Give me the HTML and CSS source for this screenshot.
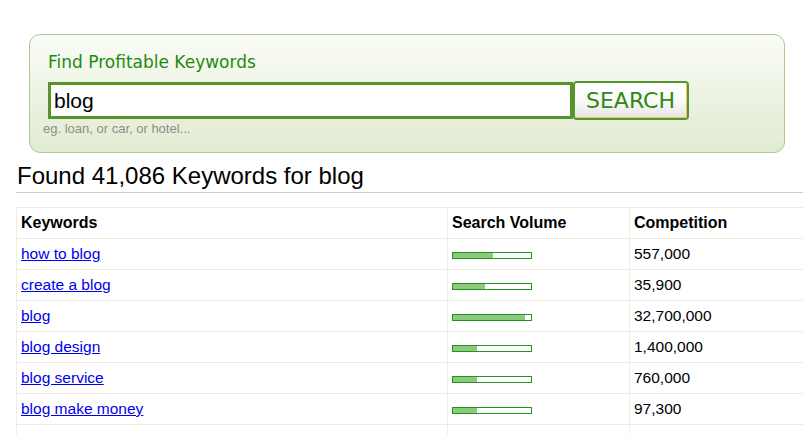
FILE: index.html
```html
<!DOCTYPE html>
<html>
<head>
<meta charset="utf-8">
<link rel="stylesheet" href="styles.css">
</head>
<body>
<div class="page">
  <form class="search-box">
    <div class="search-title">Find Profitable Keywords</div>
    <div class="search-row">
      <input class="search-input" type="text" value="blog">
      <button class="search-btn" type="button"><span class="search-btn-inner">SEARCH</span></button>
    </div>
    <div class="search-hint">eg. loan, or car, or hotel...</div>
  </form>

  <h1 class="results-title">Found 41,086 Keywords for blog</h1>

  <div class="table-wrap">
    <table class="kw-table">
      <thead>
        <tr>
          <th class="col-kw">Keywords</th>
          <th class="col-vol">Search Volume</th>
          <th class="col-comp">Competition</th>
        </tr>
      </thead>
      <tbody>
        <tr>
          <td><a href="#">how to blog</a></td>
          <td><div class="bar"><div class="bar-fill" style="width:51%"></div></div></td>
          <td>557,000</td>
        </tr>
        <tr>
          <td><a href="#">create a blog</a></td>
          <td><div class="bar"><div class="bar-fill" style="width:41%"></div></div></td>
          <td>35,900</td>
        </tr>
        <tr>
          <td><a href="#">blog</a></td>
          <td><div class="bar"><div class="bar-fill" style="width:92%"></div></div></td>
          <td>32,700,000</td>
        </tr>
        <tr>
          <td><a href="#">blog design</a></td>
          <td><div class="bar"><div class="bar-fill" style="width:31%"></div></div></td>
          <td>1,400,000</td>
        </tr>
        <tr>
          <td><a href="#">blog service</a></td>
          <td><div class="bar"><div class="bar-fill" style="width:31%"></div></div></td>
          <td>760,000</td>
        </tr>
        <tr>
          <td><a href="#">blog make money</a></td>
          <td><div class="bar"><div class="bar-fill" style="width:31%"></div></div></td>
          <td>97,300</td>
        </tr>
        <tr>
          <td>&nbsp;</td>
          <td>&nbsp;</td>
          <td>&nbsp;</td>
        </tr>
      </tbody>
    </table>
  </div>
</div>
</body>
</html>
```

FILE: styles.css
```css
html, body {
  margin: 0;
  padding: 0;
  background: #ffffff;
  overflow: hidden;
}

.page {
  width: 803px;
  height: 434px;
  overflow: hidden;
  font-family: "Liberation Sans", Arial, sans-serif;
  color: #000;
}

.search-box {
  box-sizing: border-box;
  margin: 34px 0 0 29px;
  width: 756px;
  height: 119px;
  border: 1px solid #a9cb92;
  border-radius: 11px;
  background: linear-gradient(#fbfcf8 0%, #eef4e5 45%, #e1ebd1 100%);
  padding: 16px 0 0 18px;
}

.search-title {
  font-family: "DejaVu Sans", Verdana, sans-serif;
  font-size: 17px;
  line-height: 22px;
  color: #1f8a0f;
}

.search-row {
  display: flex;
  align-items: center;
  margin-top: 8px;
}

.search-input {
  box-sizing: border-box;
  width: 525px;
  height: 37px;
  margin: 0;
  border: 3px solid #56952e;
  padding: 0 0 0 3px;
  font-family: "Liberation Sans", Arial, sans-serif;
  font-size: 21px;
  color: #000;
  background: #fff;
  outline: none;
}

.search-btn {
  box-sizing: border-box;
  width: 116px;
  height: 39px;
  margin: 0;
  padding: 0;
  border: 2px solid #56952e;
  border-radius: 4px;
  background: #fff;
  cursor: pointer;
  display: flex;
}

.search-btn-inner {
  flex: 1;
  display: flex;
  align-items: center;
  justify-content: center;
  border-right: 1px solid #f3c35a;
  border-bottom: 1px solid #f3c35a;
  border-radius: 2px;
  background: linear-gradient(#ffffff 0%, #fbfbfb 50%, #e6e6e6 100%);
  font-family: "DejaVu Sans", Verdana, sans-serif;
  font-size: 22px;
  color: #2f8a14;
}

.search-hint {
  margin: 1px 0 0 -5px;
  font-size: 13px;
  line-height: 15px;
  color: #8a8f88;
}

.results-title {
  margin: 9px 0 0 16px;
  padding: 0 0 2px 1px;
  font-family: "Liberation Sans", Arial, sans-serif;
  font-size: 24px;
  font-weight: normal;
  line-height: 28px;
  border-bottom: 1px solid #cccccc;
}

.table-wrap {
  margin: 14px 0 0 16px;
  width: 820px;
}

.kw-table {
  border-collapse: collapse;
  width: 820px;
  font-size: 15.5px;
}

.kw-table th,
.kw-table td {
  border: 1px solid #eeebe1;
  height: 31px;
  padding: 0 4px;
  text-align: left;
  vertical-align: middle;
  box-sizing: border-box;
}

.kw-table th {
  font-weight: bold;
  font-size: 16px;
}

.col-kw { width: 431px; }
.col-vol { width: 182px; }

.kw-table a {
  color: #0000ee;
  text-decoration: underline;
}

.bar {
  box-sizing: border-box;
  width: 80px;
  height: 7px;
  margin-top: 3px;
  border: 1px solid #1f961b;
  background: #fff;
}

.bar-fill {
  height: 100%;
  background: #8cc97c;
}
```
